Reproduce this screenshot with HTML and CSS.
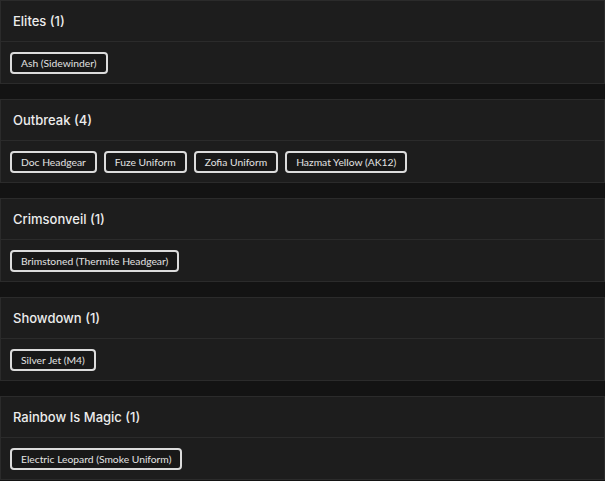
FILE: index.html
```html
<!DOCTYPE html>
<html>
<head>
<meta charset="utf-8">
<link rel="stylesheet" href="styles.css">
</head>
<body>
<div class="list">
  <section class="card">
    <div class="card-head">Elites (1)</div>
    <div class="card-body">
      <span class="tag">Ash (Sidewinder)</span>
    </div>
  </section>
  <section class="card">
    <div class="card-head">Outbreak (4)</div>
    <div class="card-body">
      <span class="tag">Doc Headgear</span>
      <span class="tag">Fuze Uniform</span>
      <span class="tag">Zofia Uniform</span>
      <span class="tag">Hazmat Yellow (AK12)</span>
    </div>
  </section>
  <section class="card">
    <div class="card-head">Crimsonveil (1)</div>
    <div class="card-body">
      <span class="tag">Brimstoned (Thermite Headgear)</span>
    </div>
  </section>
  <section class="card">
    <div class="card-head">Showdown (1)</div>
    <div class="card-body">
      <span class="tag">Silver Jet (M4)</span>
    </div>
  </section>
  <section class="card">
    <div class="card-head">Rainbow Is Magic (1)</div>
    <div class="card-body">
      <span class="tag">Electric Leopard (Smoke Uniform)</span>
    </div>
  </section>
</div>
</body>
</html>
```
FILE: styles.css
```css
html, body {
  margin: 0;
  padding: 0;
  background: #131313;
}
body {
  font-family: "Inter", "Open Sans", sans-serif;
  color: #e6e6e6;
}
.list {
  display: flex;
  flex-direction: column;
  gap: 15px;
}
.card {
  background: #1d1d1d;
  border: 1px solid #2b2b2b;
}
.card-head {
  height: 41px;
  box-sizing: border-box;
  padding: 0 12px 1px;
  display: flex;
  align-items: center;
  font-size: 13px;
  font-weight: 500;
  color: #ececec;
  border-bottom: 1px solid #2b2b2b;
}
.card-body {
  height: 41px;
  box-sizing: border-box;
  padding: 10px 9px 9px;
  display: flex;
  gap: 7px;
}
.tag {
  display: inline-flex;
  align-items: center;
  height: 22px;
  box-sizing: border-box;
  padding: 0 9px;
  border: 2px solid #dcdcdc;
  border-radius: 4px;
  background: #181818;
  font-family: "Lato", "Open Sans", sans-serif;
  font-size: 10.3px;
  color: #e2e2e2;
  white-space: nowrap;
}
```
